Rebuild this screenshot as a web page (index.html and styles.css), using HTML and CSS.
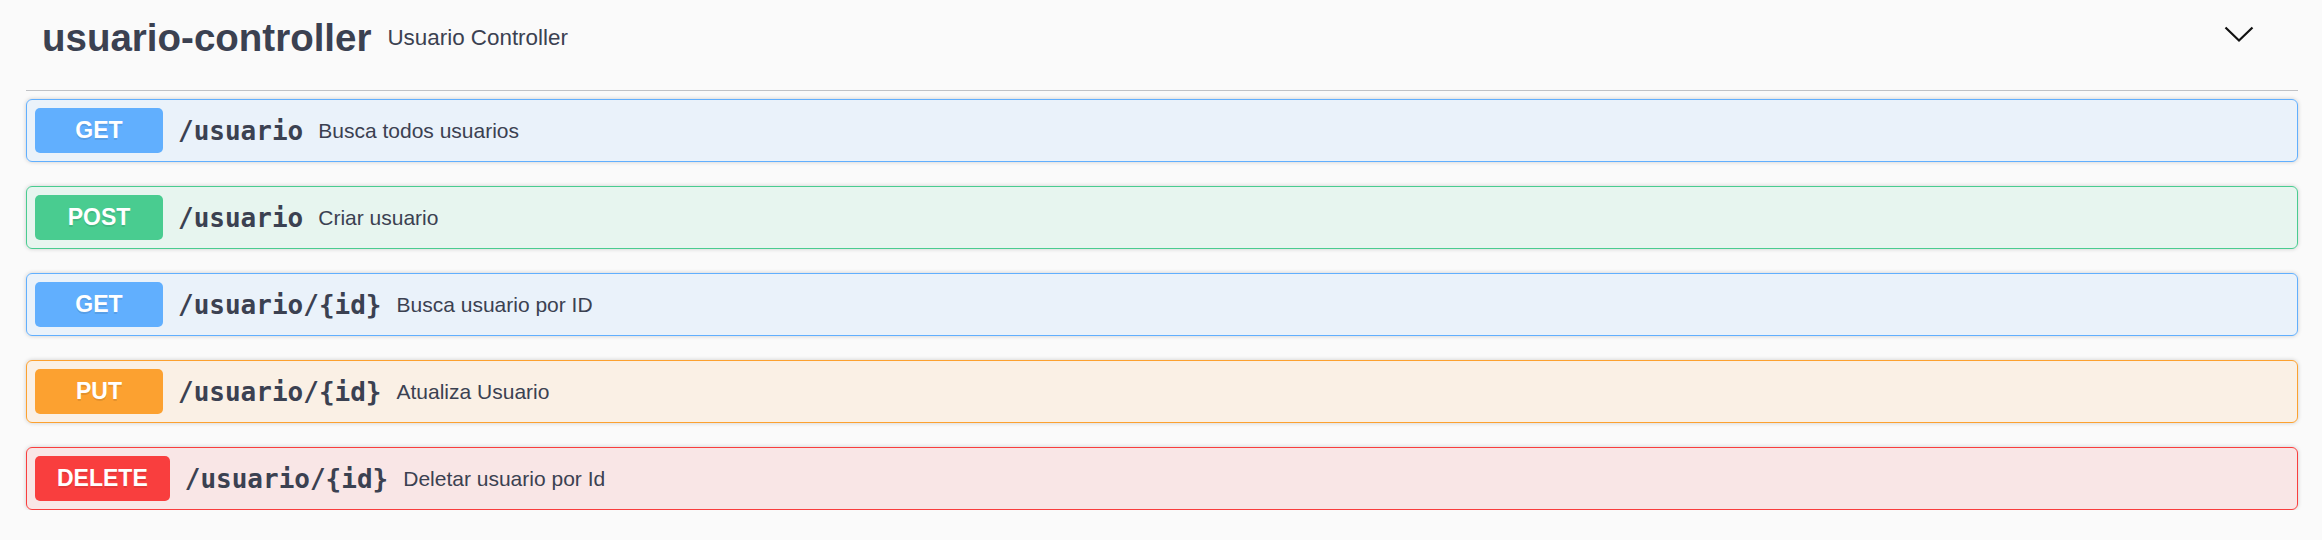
FILE: index.html
```html
<!DOCTYPE html>
<html lang="pt">
<head>
<meta charset="utf-8">
<title>usuario-controller</title>
<link rel="stylesheet" href="styles.css">
</head>
<body>
<div class="wrapper">
  <section class="tag-section">
    <div class="tag">
      <h3 class="tag-title">usuario-controller</h3>
      <small class="tag-desc">Usuario Controller</small>
      <span class="tag-spacer"></span>
      <svg class="chevron" width="30" height="17" viewBox="0 0 30 17" aria-hidden="true">
        <polyline points="1.5,1.5 15,14.5 28.5,1.5" fill="none" stroke="#111" stroke-width="2.2"/>
      </svg>
    </div>
    <div class="ops">
      <div class="op op-get">
        <span class="method">GET</span>
        <span class="path">/usuario</span>
        <span class="desc">Busca todos usuarios</span>
      </div>
      <div class="op op-post">
        <span class="method">POST</span>
        <span class="path">/usuario</span>
        <span class="desc">Criar usuario</span>
      </div>
      <div class="op op-get">
        <span class="method">GET</span>
        <span class="path">/usuario/{id}</span>
        <span class="desc">Busca usuario por ID</span>
      </div>
      <div class="op op-put">
        <span class="method">PUT</span>
        <span class="path">/usuario/{id}</span>
        <span class="desc">Atualiza Usuario</span>
      </div>
      <div class="op op-delete">
        <span class="method">DELETE</span>
        <span class="path">/usuario/{id}</span>
        <span class="desc">Deletar usuario por Id</span>
      </div>
    </div>
  </section>
</div>
</body>
</html>
```

FILE: styles.css
```css
html, body {
  margin: 0;
  padding: 0;
}

body {
  background: #fafafa;
  font-family: "Liberation Sans", Arial, sans-serif;
  color: #3b4151;
}

.wrapper {
  padding: 0 24px 0 26px;
}

.tag {
  display: flex;
  align-items: center;
  box-sizing: border-box;
  height: 91px;
  padding: 0 44px 14px 16px;
  border-bottom: 1px solid rgba(59, 65, 81, 0.3);
  margin-bottom: 8px;
}

.tag-title {
  margin: 0;
  font-size: 38.5px;
  font-weight: bold;
  color: #3b4151;
}

.tag-desc {
  font-size: 22.4px;
  padding: 0 16px;
  color: #3b4151;
}

.tag-spacer {
  flex: 1;
}

.chevron {
  display: block;
  margin-bottom: 8px;
}

.ops {
  display: flex;
  flex-direction: column;
  gap: 24px;
}

.op {
  display: flex;
  align-items: center;
  padding: 8px;
  border: 1px solid;
  border-radius: 6px;
  box-shadow: 0 0 4px rgba(0, 0, 0, 0.19);
}

.method {
  display: flex;
  align-items: center;
  justify-content: center;
  box-sizing: border-box;
  min-width: 128px;
  height: 45px;
  padding: 0 22px;
  border-radius: 5px;
  font-size: 23px;
  font-weight: bold;
  color: #fff;
  text-shadow: 0 1.5px 0 rgba(0, 0, 0, 0.1);
}

.path {
  padding: 0 15px;
  font-family: "DejaVu Sans Mono", monospace;
  font-weight: bold;
  font-size: 26px;
  color: #3b4151;
}

.desc {
  font-size: 21px;
  color: #3b4151;
}

.op-get {
  border-color: #61affe;
  background: rgba(97, 175, 254, 0.1);
}
.op-get .method { background: #61affe; }

.op-post {
  border-color: #49cc90;
  background: rgba(73, 204, 144, 0.1);
}
.op-post .method { background: #49cc90; }

.op-put {
  border-color: #fca130;
  background: rgba(252, 161, 48, 0.1);
}
.op-put .method { background: #fca130; }

.op-delete {
  border-color: #f93e3e;
  background: rgba(249, 62, 62, 0.1);
}
.op-delete .method { background: #f93e3e; }
```
